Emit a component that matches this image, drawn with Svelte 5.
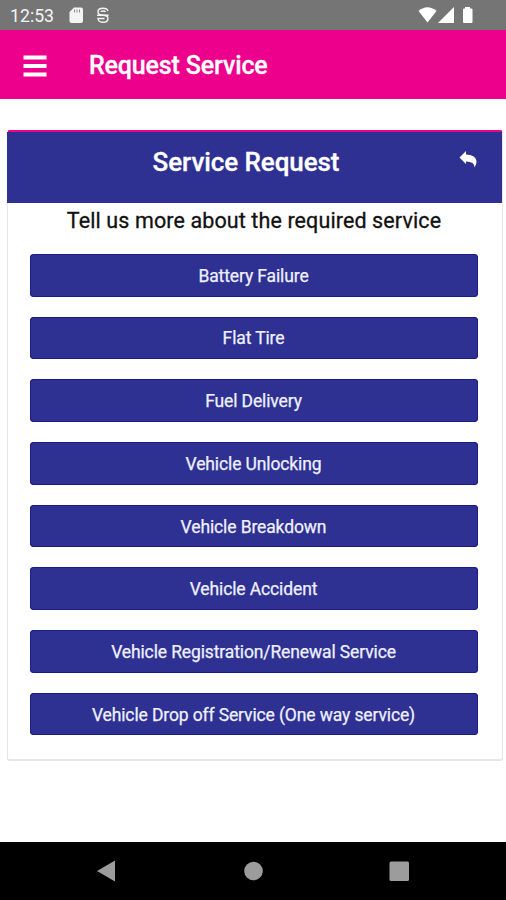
<script>
  const services = [
    "Battery Failure",
    "Flat Tire",
    "Fuel Delivery",
    "Vehicle Unlocking",
    "Vehicle Breakdown",
    "Vehicle Accident",
    "Vehicle Registration/Renewal Service",
    "Vehicle Drop off Service (One way service)",
  ];
</script>

<style>
  :global(body) {
    background: #fff;
  }

  .screen {
    display: flex;
    flex-direction: column;
    width: 506px;
    height: 900px;
    font-family: Roboto, "Liberation Sans", sans-serif;
    overflow: hidden;
  }

  svg {
    display: block;
  }

  button {
    padding: 0;
    border: 0;
    background: none;
    color: inherit;
    font: inherit;
  }

  .status {
    display: flex;
    justify-content: space-between;
    height: 30px;
    background: #757575;
    color: #f4f4f4;
  }

  .clock {
    display: flex;
    padding-left: 10px;
    font-size: 17.7px;
    line-height: 32px;
  }

  .clock span {
    width: 55px;
  }

  .toolbar {
    display: flex;
    align-items: center;
    height: 68.5px;
    padding-left: 23px;
    background: #ec008c;
    color: #fff;
  }

  .toolbar button {
    margin-top: 3px;
  }

  .toolbar h1 {
    margin: 4px 0 0 42px;
    font-size: 25px;
    font-weight: 500;
    letter-spacing: -0.15px;
    line-height: 30px;
    -webkit-text-stroke: 0.3px;
  }

  main {
    flex: 1;
    padding: 31.5px 3.5px 0 6.5px;
  }

  .card {
    box-sizing: border-box;
    height: 631px;
    border: 1px solid #e6e6e6;
    border-top: 2px solid #ec008c;
    border-bottom-width: 2px;
    border-radius: 3px;
  }

  .card header {
    display: grid;
    grid-template-columns: 48px 1fr 64px;
    height: 70.5px;
    margin-left: -1px;
    background: #2e3092;
    color: #fff;
  }

  .card h2 {
    grid-column: 2;
    margin: 14px 0 0;
    font-size: 26px;
    font-weight: 500;
    letter-spacing: -0.08px;
    line-height: 32px;
    text-align: center;
    white-space: nowrap;
    -webkit-text-stroke: 0.3px;
  }

  .back {
    align-self: start;
    margin: 18px 0 0 18px;
  }

  .card p {
    margin: 4px 1px 0 0;
    color: #111;
    font-size: 21.5px;
    letter-spacing: 0.11px;
    line-height: 28px;
    text-align: center;
    white-space: nowrap;
    -webkit-text-stroke: 0.3px;
  }

  .services {
    display: flex;
    flex-direction: column;
    gap: 20.2px;
    padding: 19.5px 24px 0 22px;
  }

  .services button {
    height: 42.5px;
    padding-top: 1px;
    border-radius: 4px;
    background: #2e3092;
    box-shadow: inset 0 0 0 1px #1b1c86;
    color: #eef0ff;
    font-size: 17.5px;
    letter-spacing: -0.12px;
    white-space: nowrap;
    -webkit-text-stroke: 0.25px;
  }

  .nav {
    height: 58px;
    background: #000;
  }
</style>

<div class="screen">
  <div class="status">
    <div class="clock">
      <span>12:53</span>
      <svg width="50" height="30" fill="#f4f4f4">
        <path d="M9 7.500h7q2 0 2 2v11.500q0 2-2 2H6.500q-2 0-2-2V12z" />
        <path d="M9.500 9.500v3M12 9.500v3M14.500 9.500v3" stroke="#8a8a8a" stroke-width="1" />
        <g fill="none" stroke="#f4f4f4" stroke-width="1.400">
          <path d="M43 11Q42 8.300 38 8.300C34.500 8.300 33 9.500 33 11.800C33 14.500 35 15.200 38 15.200H43.500" />
          <path d="M40.500 12Q40 11 38 11Q36 11 36 12M32 15.200H38C41.500 15.200 43 16.300 43 18.500C43 21 41.500 22.300 38 22.300Q33.500 22.300 33 18.500H39.500" />
        </g>
      </svg>
    </div>
    <svg width="90" height="30" fill="#fff">
      <path d="M2.500 11Q11.500 3.500 20.500 11L11.500 22.500z" />
      <path d="M38 7v16H22z" />
      <path d="M48.500 8.500H49V7h5v1.500h1.500q1 0 1 1V22q0 1-1 1h-7.500q-1 0-1-1V9.500q0-1 1-1z" />
    </svg>
  </div>

  <div class="toolbar">
    <button aria-label="Menu">
      <svg width="24" height="22" fill="#fff">
        <path d="M.500.500h23v4H.500zM.500 9h23v4H.500zM.500 17.500h23v4H.500z" />
      </svg>
    </button>
    <h1>Request Service</h1>
  </div>

  <main>
    <section class="card">
      <header>
        <h2>Service Request</h2>
        <button class="back" aria-label="Back">
          <svg width="24" height="20" viewBox="0 0 24 20" fill="#fff">
            <path d="M3.500 7.500L10 1v3.500q9.500 0 10.500 6.500 .3 3.500-2 6.500.2-6-8.500-6V14z" />
          </svg>
        </button>
      </header>
      <p>Tell us more about the required service</p>
      <div class="services">
        {#each services as service}
          <button>{service}</button>
        {/each}
      </div>
    </section>
  </main>

  <div class="nav">
    <svg width="506" height="58" fill="#9c9c9c">
      <path d="M97 29l18-10.500v21z" />
      <circle cx="253.500" cy="29" r="9.300" />
      <rect x="389.500" y="19.500" width="19.500" height="19.500" rx="1.500" />
    </svg>
  </div>
</div>
